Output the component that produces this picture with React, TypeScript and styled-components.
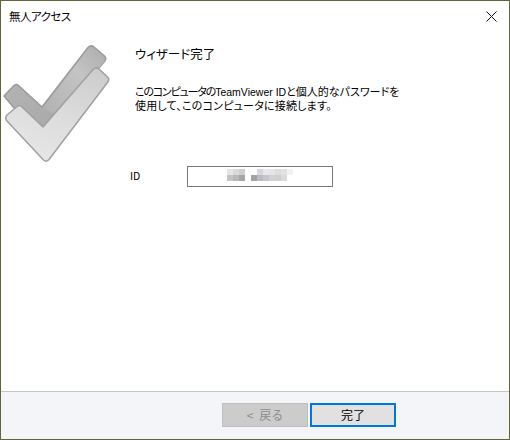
import React from "react";
import styled, { createGlobalStyle } from "styled-components";

const Global = createGlobalStyle`
  html, body { margin: 0; padding: 0; background: #fff; }
  * { box-sizing: border-box; }
`;

const Window = styled.div`
  width: 510px;
  height: 440px;
  display: flex;
  flex-direction: column;
  background: #fff;
  border: 1px solid #63633c;
  font-family: "Noto Sans CJK JP", "Liberation Sans", sans-serif;
  font-feature-settings: "palt";
  color: #000;
  overflow: hidden;
`;
const TitleBar = styled.div`
  height: 30px;
  flex: none;
  display: flex;
  align-items: center;
  justify-content: space-between;
  padding: 0 12px 0 8px;
  font-size: 11.5px;
  letter-spacing: -0.5px;
`;
const CloseIcon = styled.svg`
  width: 11px;
  height: 11px;
  display: block;
`;
const Body = styled.div`
  flex: 1;
  display: flex;
  min-height: 0;
`;
const Aside = styled.div`
  width: 129px;
  flex: none;
  padding: 13px 0 0 1px;
`;
const Main = styled.div`
  flex: 1;
  display: flex;
  flex-direction: column;
`;
const Heading = styled.h1`
  margin: 13px 0 0 5px;
  font-size: 12.5px;
  line-height: 20px;
  font-weight: 400;
`;
const Description = styled.p`
  margin: 21px 0 0 5px;
  width: 290px;
  font-size: 11px;
  line-height: 13px;
`;
const Run = styled.span<{ $spacing: number }>`
  letter-spacing: ${(p) => p.$spacing}px;
`;
const Latin = styled.span`
  font-family: "Liberation Sans", sans-serif;
  font-size: 10.5px;
`;
const IdRow = styled.div`
  display: flex;
  align-items: center;
  margin-top: 54px;
`;
const IdLabel = styled.span`
  width: 57px;
  font-size: 10.5px;
  padding-bottom: 2px;
`;
const IdField = styled.div`
  width: 146px;
  height: 21px;
  border: 1px solid #7a7a7a;
  display: flex;
  align-items: center;
  justify-content: center;
  padding-bottom: 4px;
`;
const Footer = styled.div`
  height: 48px;
  flex: none;
  border-top: 1px solid #c3c4c8;
  background: #f4f5f8;
  display: flex;
  justify-content: flex-end;
  gap: 2px;
  padding: 11px 113px 0 0;
`;
const Button = styled.button<{ $primary?: boolean }>`
  width: 86px;
  height: 24px;
  padding: 0;
  font-family: inherit;
  font-size: 12px;
  line-height: 1;
  word-spacing: 3px;
  border: ${(p) => (p.$primary ? "2px solid #0078d7" : "1px solid #bfbfbf")};
  background: ${(p) => (p.$primary ? "#e1e1e1" : "#cccccc")};
  color: ${(p) => (p.$primary ? "#000" : "#8c8c8c")};
`;

const rowA = ["#e6e6e8", "#d9d9dc", "#cfcfd3", "", "#fff", "#d9d9dc", "#e6e8ee", "#e3e5ea", "#e0dedc", "#e4e2e0", "#f0f2f8"];
const rowB = ["#c4c4c6", "#b8b8ba", "#a6a6aa", "", "#a2a2a6", "#bcbcc0", "#c6c6ca", "#d2d2d4", "#d0d0d0", "#dadada", "#fff"];

const App = () => (
  <>
    <Global />
    <Window>
      <TitleBar>
        <span>無人アクセス</span>
        <CloseIcon viewBox="0 0 11 11">
          <path d="M0.5 0.5L10.5 10.5M10.5 0.5L0.5 10.5" stroke="#111" strokeWidth="1" fill="none" />
        </CloseIcon>
      </TitleBar>
      <Body>
        <Aside>
          <svg width="112" height="124" viewBox="2 44 112 124" style={{ display: "block" }}>
            <defs>
              <linearGradient id="back" x1="0" y1="0" x2="1" y2="1">
                <stop offset="0" stopColor="#b8b8b8" />
                <stop offset="1" stopColor="#a4a4a4" />
              </linearGradient>
              <linearGradient id="backArm" x1="0" y1="1" x2="1" y2="0">
                <stop offset="0" stopColor="#b0b0b0" />
                <stop offset="0.6" stopColor="#c4c4c4" />
                <stop offset="1" stopColor="#acacac" />
              </linearGradient>
              <linearGradient id="front" x1="0.8" y1="0" x2="0.3" y2="1">
                <stop offset="0" stopColor="#cdcdcd" />
                <stop offset="0.5" stopColor="#dcdcdc" />
                <stop offset="1" stopColor="#e6e6e6" />
              </linearGradient>
            </defs>
            <path
              d="M4 96 L14 85.5 Q16.500 83.500 18.500 85.500 L42 107 L88 47.500 Q91 44.500 94 47 L104.500 56 Q107 58.500 104.500 61.500 L46 130 L14 108 Z"
              fill="url(#back)"
              stroke="#9a9a9a"
              strokeWidth="1.500"
              strokeLinejoin="round"
            />
            <path
              d="M43 108 L88 49 Q91 46 93.500 48 L104 57 Q106 59.500 104 62 L58 116 Z"
              fill="url(#backArm)"
            />
            <path
              d="M7 115 L17 106.500 Q19.500 104.500 21.500 106.500 L43 127 L93 69.500 Q96 66.500 99 69 L107.500 77 Q110 79.500 107.500 82.500 L49 159.500 Q46.500 162.500 43.500 160 L7 121 Q4.500 118 7 115 Z"
              fill="url(#front)"
              stroke="#a0a0a0"
              strokeWidth="1.500"
              strokeLinejoin="round"
            />
          </svg>
        </Aside>
        <Main>
          <Heading>ウィザード完了</Heading>
          <Description>
            <Run $spacing={-1.2}>このコンピュータの</Run>
            <Latin>TeamViewer ID</Latin>と個人的なパスワードを
            <br />
            <Run $spacing={0.2}>使用して、このコンピュータに接続します。</Run>
          </Description>
          <IdRow>
            <IdLabel>ID</IdLabel>
            <IdField>
              <svg width="66" height="12" viewBox="0 0 66 12">
                {rowA.map((c, i) => c && <rect key={`a${i}`} x={i * 6} y={0} width="6" height="6" fill={c} />)}
                {rowB.map((c, i) => c && <rect key={`b${i}`} x={i * 6} y={6} width="6" height="6" fill={c} />)}
              </svg>
            </IdField>
          </IdRow>
        </Main>
      </Body>
      <Footer>
        <Button disabled>&lt; 戻る</Button>
        <Button $primary>完了</Button>
      </Footer>
    </Window>
  </>
);

export default App;
